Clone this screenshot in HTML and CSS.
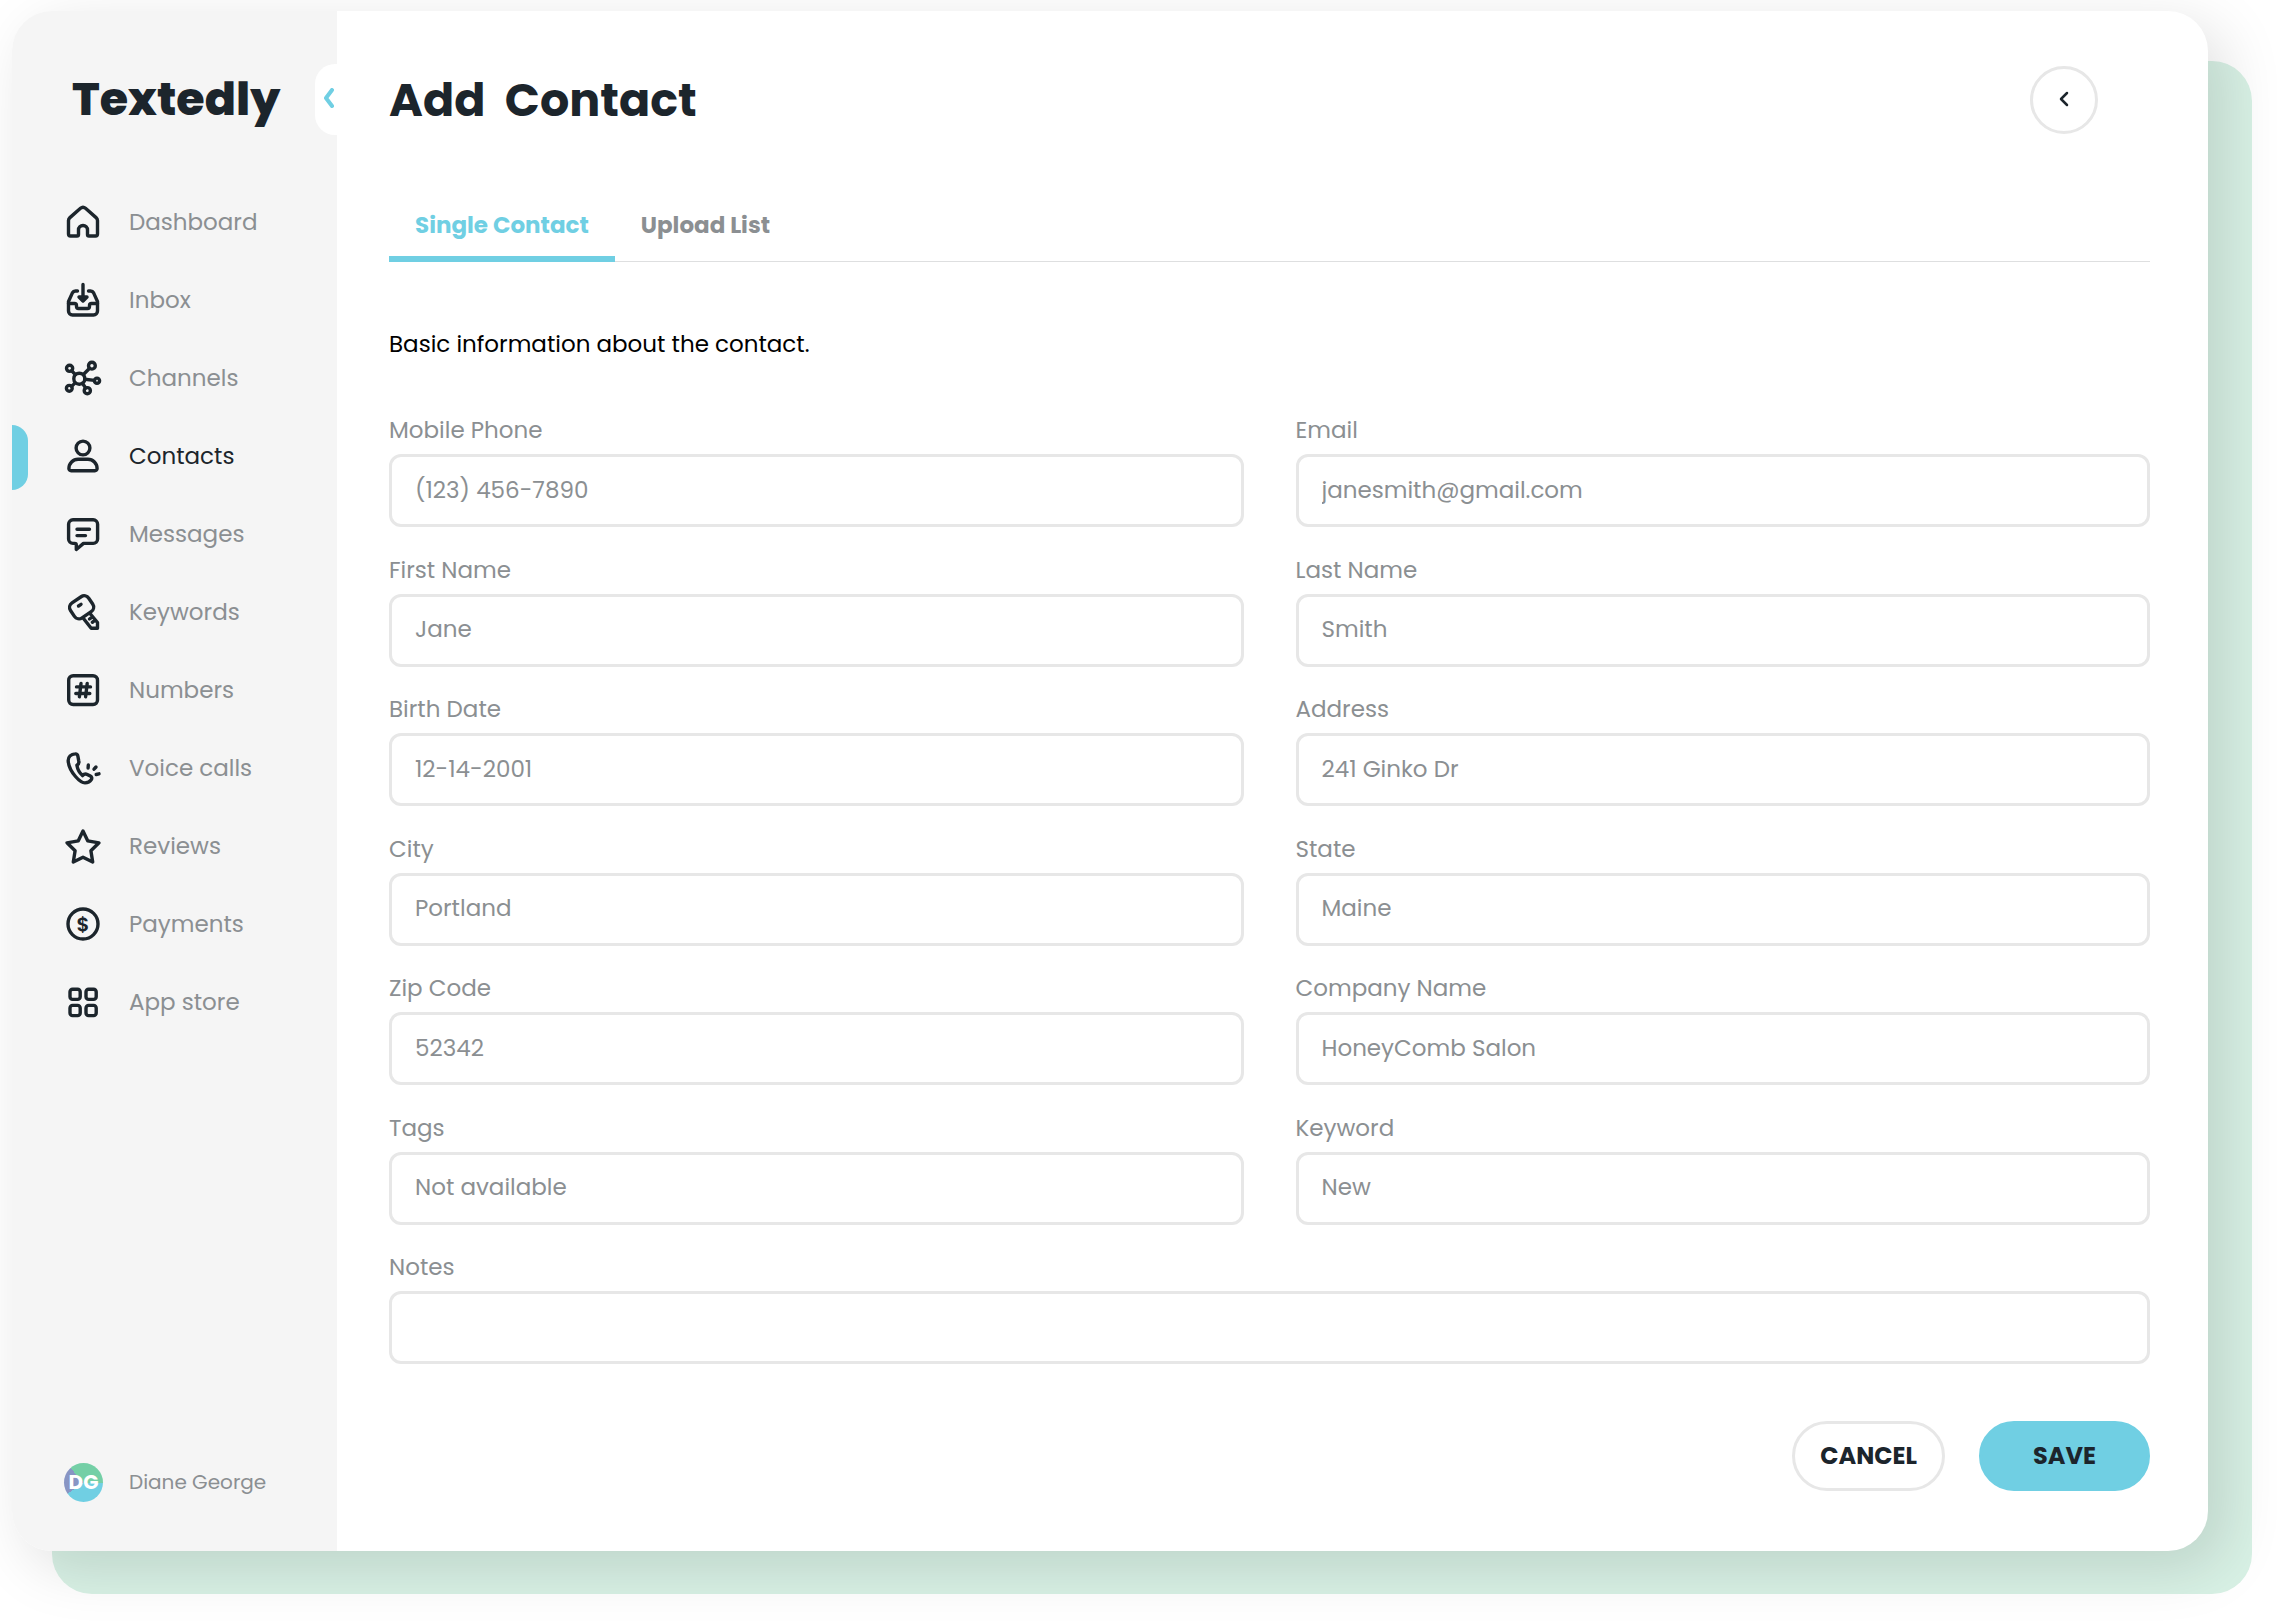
FILE: index.html
```html
<!DOCTYPE html>
<html lang="en">
<head>
<meta charset="UTF-8">
<meta name="viewport" content="width=device-width, initial-scale=1">
<title>Textedly - Add Contact</title>
<link rel="stylesheet" href="styles.css">
</head>
<body>

<div class="backdrop">
<div class="card">

    <!-- sidebar -->
    <aside class="sidebar">
        <a class="logo" href="#">Textedly</a>
        <button class="collapse" type="button" aria-label="Collapse menu">
            <svg width="10" height="20" viewBox="0 0 10 20"><path d="M8 2L2 10l6 8"/></svg>
        </button>

        <nav class="nav">
            <a class="nav-item" href="#">
                <svg class="icon" viewBox="0 0 36 36"><path d="M15.5 4.3L4.9 13.6a4 4 0 0 0-1.4 3V30a2 2 0 0 0 2 2H12a1.5 1.5 0 0 0 1.5-1.5V26a4.5 4.5 0 0 1 9 0v4.5A1.5 1.5 0 0 0 24 32h6.5a2 2 0 0 0 2-2V16.6a4 4 0 0 0-1.4-3L20.5 4.3a3.8 3.8 0 0 0-5 0z"/></svg>
                Dashboard
            </a>
            <a class="nav-item" href="#">
                <svg class="icon" viewBox="0 0 36 36"><path d="M12.5 9h-2a3.500 3.500 0 0 0-3.100 1.900L3.500 19.500V29a4 4 0 0 0 4 4h21a4 4 0 0 0 4-4v-9.500l-3.900-8.600A3.500 3.500 0 0 0 25.500 9h-2"/><path d="M3.500 21.500h6a2 2 0 0 1 2 2v1a2 2 0 0 0 2 2h9a2 2 0 0 0 2-2v-1a2 2 0 0 1 2-2h6M18 2.500V18"/><path class="solid" d="M14 15h8l-4 4z"/></svg>
                Inbox
            </a>
            <a class="nav-item" href="#">
                <svg class="icon" viewBox="0 0 36 36"><circle cx="14.3" cy="18.7" r="5.5"/><circle cx="4.6" cy="8.3" r="3.1"/><circle cx="26.9" cy="5.7" r="3.4"/><circle cx="32" cy="20.7" r="2.6"/><circle cx="22.3" cy="30.7" r="3.1"/><circle cx="4.3" cy="28.3" r="2.9"/><path d="M6.8 10.8l3.5 3.7M24.6 8.3l-6.2 6.2M29.5 20.4l-9.6-1.1M20.7 28l-3.300-4.800M6.600 26.400l3.600-3.500"/></svg>
                Channels
            </a>
            <a class="nav-item active" href="#">
                <svg class="icon" viewBox="0 0 36 36"><circle cx="18" cy="10" r="6.9"/><path d="M3.9 30.5a9.2 9.2 0 0 1 9.2-9.2h9.8a9.2 9.2 0 0 1 9.2 9.2 2.2 2.2 0 0 1-2.2 2.2H6.1a2.2 2.2 0 0 1-2.2-2.2z"/></svg>
                Contacts
            </a>
            <a class="nav-item" href="#">
                <svg class="icon" viewBox="0 0 36 36"><path d="M8 3.8h20.2a4.4 4.4 0 0 1 4.4 4.4V23a4.4 4.4 0 0 1-4.4 4.4h-9.700L11.300 33.500V29a1.600 1.600 0 0 0-1.600-1.600H8A4.400 4.400 0 0 1 3.600 23V8.200A4.400 4.400 0 0 1 8 3.800z"/><path d="M12 13.200h12.500M12 19.600h8.500"/></svg>
                Messages
            </a>
            <a class="nav-item" href="#">
                <svg class="icon" viewBox="0 0 36 36"><rect x="5.6" y="4.3" width="22" height="18" rx="5.5" transform="rotate(-34 16.6 13.3)"/><path d="M13.5 12l2.500-1.700M18.500 24.500l7.700 9.800h6.300v-5.800L25 19.500M24.500 25l2.600-1.900M27.300 28.300l2.300-1.800"/></svg>
                Keywords
            </a>
            <a class="nav-item" href="#">
                <svg class="icon" viewBox="0 0 36 36"><rect x="3.7" y="3.7" width="28.8" height="28.8" rx="4.5"/><path d="M16 11.5l-1.600 13.300M22.200 11.500l-1.600 13.300M11.500 14.900h14M10.800 21.500h14"/></svg>
                Numbers
            </a>
            <a class="nav-item" href="#">
                <svg class="icon" viewBox="0 0 36 36"><path d="M10.2 3.9C6 4 3 6.800 3.200 10.800c.3 5.600 3 10.700 7.300 15.700 3.700 4.300 6.500 6.400 9.500 6.400 2.700 0 5.200-1.500 6.300-3.300.9-1.500.4-2.700-1-3.500l-3.100-1.700c-1.500-.8-3-.7-4.700 1.200-2.800-2.500-5-6.500-5.600-10.300 1.800-1.100 2.300-2.300 1.900-4.200l-.9-4.900c-.3-1.600-1-2.400-2.700-2.300z"/><path d="M23.300 15l-.2 3M31 17l-2 2.200M34 23.800l-2.800.7"/></svg>
                Voice calls
            </a>
            <a class="nav-item" href="#">
                <svg class="icon" viewBox="0 0 36 36"><path d="M18 3l4.700 9.800 11.300 2-8.100 8 1.800 11.300L18 29.200l-9.700 4.900 1.800-11.300-8.100-8 11.300-2z"/></svg>
                Reviews
            </a>
            <a class="nav-item" href="#">
                <svg class="icon" viewBox="0 0 36 36"><circle cx="18" cy="18" r="15"/><text class="dollar" x="18" y="25" text-anchor="middle">$</text></svg>
                Payments
            </a>
            <a class="nav-item" href="#">
                <svg class="icon" viewBox="0 0 36 36"><rect x="5" y="5.2" width="10.2" height="10.2" rx="2.6"/><rect x="21" y="5.2" width="10.2" height="10.2" rx="2.6"/><rect x="5" y="21.4" width="10.2" height="10.2" rx="2.6"/><rect x="21" y="21.4" width="10.2" height="10.2" rx="2.6"/></svg>
                App store
            </a>
        </nav>

        <a class="user" href="#">
            <span class="avatar">DG</span>
            Diane George
        </a>
    </aside>

    <!-- content -->
    <main class="main">
        <header class="header">
            <h1 class="title">Add&nbsp; Contact</h1>
            <button class="back" type="button" aria-label="Back">
                <svg width="10" height="16" viewBox="0 0 10 16"><path d="M8 2L2 8l6 6"/></svg>
            </button>
        </header>

        <div class="tabs" role="tablist">
            <button class="tab selected" type="button" role="tab" aria-selected="true">Single Contact</button>
            <button class="tab" type="button" role="tab" aria-selected="false">Upload List</button>
        </div>

        <p class="intro">Basic information about the contact.</p>

        <form class="form">
            <div class="fields">
                <div class="field">
                    <label for="phone">Mobile Phone</label>
                    <input id="phone" type="tel" placeholder="(123) 456-7890">
                </div>
                <div class="field">
                    <label for="email">Email</label>
                    <input id="email" type="email" placeholder="janesmith@gmail.com">
                </div>
                <div class="field">
                    <label for="first">First Name</label>
                    <input id="first" type="text" placeholder="Jane">
                </div>
                <div class="field">
                    <label for="last">Last Name</label>
                    <input id="last" type="text" placeholder="Smith">
                </div>
                <div class="field">
                    <label for="birth">Birth Date</label>
                    <input id="birth" type="text" placeholder="12-14-2001">
                </div>
                <div class="field">
                    <label for="address">Address</label>
                    <input id="address" type="text" placeholder="241 Ginko Dr">
                </div>
                <div class="field">
                    <label for="city">City</label>
                    <input id="city" type="text" placeholder="Portland">
                </div>
                <div class="field">
                    <label for="state">State</label>
                    <input id="state" type="text" placeholder="Maine">
                </div>
                <div class="field">
                    <label for="zip">Zip Code</label>
                    <input id="zip" type="text" placeholder="52342">
                </div>
                <div class="field">
                    <label for="company">Company Name</label>
                    <input id="company" type="text" placeholder="HoneyComb Salon">
                </div>
                <div class="field">
                    <label for="tags">Tags</label>
                    <input id="tags" type="text" placeholder="Not available">
                </div>
                <div class="field">
                    <label for="keyword">Keyword</label>
                    <input id="keyword" type="text" placeholder="New">
                </div>
                <div class="field wide">
                    <label for="notes">Notes</label>
                    <input id="notes" type="text">
                </div>
            </div>

            <div class="actions">
                <button class="btn" type="button">CANCEL</button>
                <button class="btn save" type="submit">SAVE</button>
            </div>
        </form>
    </main>

</div>
</div>

</body>
</html>
```
FILE: styles.css
```css
* {
    box-sizing: border-box;
}

body {
    margin: 0;
    display: flow-root;
    background: #fff;
    color: #1c252c;
    font-family: Poppins, Inter, sans-serif;
    font-size: 23px;
    line-height: 36px;
}

a {
    color: inherit;
    text-decoration: none;
}

button {
    font: inherit;
    color: inherit;
    cursor: pointer;
}

svg {
    fill: none;
    stroke: currentColor;
    stroke-width: 3.4;
    stroke-linecap: round;
    stroke-linejoin: round;
}

/* green sheet behind the card */
.backdrop {
    display: flex;
    min-height: calc(100vh - 88px);
    margin: 61px 25px 27px 52px;
    border-radius: 40px;
    background: #d8f1e5;
}

.card {
    flex: 1;
    display: flex;
    margin: -50px 44px 43px -40px;
    border-radius: 40px;
    background: #fff;
    box-shadow: 16px 16px 60px rgba(0, 0, 0, 0.13);
}

/* sidebar */
.sidebar {
    position: relative;
    flex: none;
    width: 325px;
    display: flex;
    flex-direction: column;
    padding: 52px 0 49px;
    border-radius: 40px 0 0 40px;
    background: #f5f5f5;
}

.logo {
    padding-left: 60px;
    font-size: 46px;
    line-height: 72px;
    font-weight: 800;
}

.collapse {
    position: absolute;
    top: 53px;
    right: 0;
    width: 22px;
    height: 71px;
    display: flex;
    align-items: center;
    justify-content: center;
    padding: 0 0 4px 6px;
    border: 0;
    border-radius: 20px 0 0 20px;
    background: #fff;
    color: #70cfe3;
}

.collapse svg {
    stroke-width: 4;
}

.nav {
    display: flex;
    flex-direction: column;
    margin-top: 48px;
}

.nav-item,
.user {
    display: flex;
    align-items: center;
    color: #8b8f92;
}

.nav-item {
    position: relative;
    gap: 28px;
    height: 78px;
    padding-left: 53px;
}

.nav-item.active {
    color: #1c252c;
}

.nav-item.active::before {
    content: "";
    position: absolute;
    left: 0;
    top: 8px;
    width: 16px;
    height: 65px;
    border-radius: 0 16px 16px 0;
    background: #70cfe3;
}

.icon {
    width: 36px;
    height: 36px;
    color: #1c252c;
    overflow: visible;
}

.solid {
    fill: currentColor;
}

.dollar {
    fill: currentColor;
    stroke: none;
    font-size: 20px;
    font-weight: 600;
}

.user {
    gap: 26px;
    margin-top: auto;
    padding-left: 52px;
    font-size: 20px;
    line-height: 39px;
}

.avatar {
    width: 39px;
    height: 39px;
    border-radius: 50%;
    background: conic-gradient(from -42deg, #74cfa6 134deg, #70cfe3 134deg 277deg, #8895c4 277deg);
    color: #fff;
    font-size: 20px;
    font-weight: 700;
    text-align: center;
}

/* content */
.main {
    flex: 1;
    min-width: 0;
    display: flex;
    flex-direction: column;
    padding: 55px 58px 60px 52px;
}

.header {
    display: flex;
    align-items: center;
    justify-content: space-between;
    padding-right: 52px;
}

.title {
    margin: 0;
    font-size: 46px;
    line-height: 68px;
    font-weight: 700;
}

.back {
    width: 68px;
    height: 68px;
    display: flex;
    align-items: center;
    justify-content: center;
    padding: 0 0 2px;
    border: 3px solid #e7e7e7;
    border-radius: 50%;
    background: #fff;
}

.back svg {
    stroke-width: 2.5;
}

.tabs {
    display: flex;
    margin-top: 60px;
    box-shadow: inset 0 -1px #dedfe0;
}

.tab {
    padding: 13px 26px;
    border: 0;
    border-bottom: 6px solid transparent;
    background: none;
    color: #8b8f92;
    font-weight: 700;
}

.tab.selected {
    border-color: #70cfe3;
    color: #70cfe3;
}

.intro {
    margin: 64px 0 50px;
    color: #000;
}

.form {
    flex: 1;
    display: flex;
    flex-direction: column;
}

/* rows share out the free height */
.fields {
    flex: 1;
    display: grid;
    grid-template-columns: 1fr 1fr;
    gap: 20px 52px;
    align-content: space-between;
}

.field {
    min-width: 0;
    display: flex;
    flex-direction: column;
    gap: 6px;
    color: #8b8f92;
}

.field.wide {
    grid-column: 1 / -1;
}

.field input {
    width: 100%;
    height: 73px;
    padding: 0 23px 2px;
    border: 3px solid #e7e7e7;
    border-radius: 12px;
    background: #fff;
    color: #1c252c;
    font: inherit;
}

.field input::placeholder {
    color: #8b8f92;
    opacity: 1;
}

.actions {
    display: flex;
    justify-content: flex-end;
    gap: 34px;
    margin-top: 57px;
}

.btn {
    height: 70px;
    padding: 0 25px;
    border: 3px solid #e7e7e7;
    border-radius: 35px;
    background: #fff;
    font-size: 24px;
    font-weight: 700;
}

.btn.save {
    padding: 0 51px;
    border-color: #70cfe3;
    background: #70cfe3;
}
```
